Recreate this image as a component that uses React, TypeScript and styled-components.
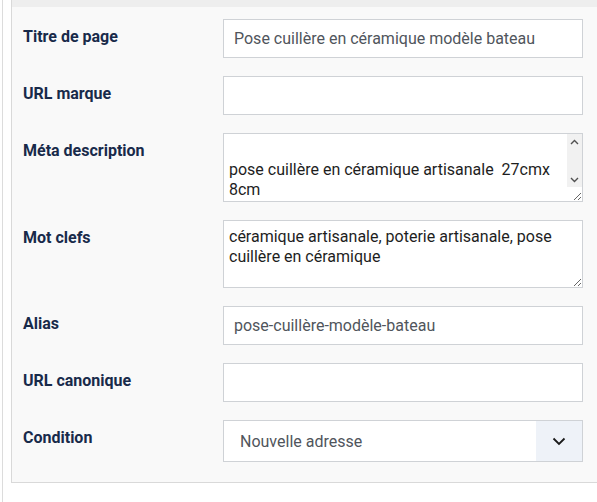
import React from "react";
import styled, { createGlobalStyle } from "styled-components";

const Global = createGlobalStyle`
  html, body { margin: 0; padding: 0; background: #ffffff; }
  body { font-family: Roboto, "Noto Sans", "Liberation Sans", sans-serif; overflow: hidden; }
  * { box-sizing: border-box; }
`;

const Page = styled.div`
  margin-left: 2px;
  border-left: 1px solid #dcdcdc;
  padding-left: 8px;
  min-height: 502px;
  width: 620px;
`;

const Panel = styled.div`
  width: 610px;
  background: #f9f9f9;
  border-left: 1px solid #d9d9d9;
  border-bottom: 1px solid #d9d9d9;
`;

const TopBand = styled.div`
  height: 7px;
  background: #eeeeee;
`;

const Body = styled.div`
  padding: 12px 0 20px 11px;
  display: flex;
  flex-direction: column;
  gap: 18px;
`;

const Row = styled.div`
  display: grid;
  grid-template-columns: 200px 360px;
  align-items: start;
`;

const Label = styled.label`
  padding-top: 6px;
  font-size: 16px;
  line-height: 24px;
  font-weight: 700;
  color: #182a4a;
`;

const Input = styled.input`
  display: block;
  width: 360px;
  height: 39px;
  padding: 0 10px;
  border: 1px solid #cfd2d6;
  background: #ffffff;
  font-family: inherit;
  font-size: 16px;
  color: #50555c;
  outline: none;
`;

const AreaWrap = styled.div`
  position: relative;
  width: 360px;
`;

const Area = styled.textarea<{ $h: number; $bar?: boolean }>`
  display: block;
  width: 360px;
  height: ${(p) => p.$h}px;
  padding: 6px ${(p) => (p.$bar ? 20 : 5)}px 6px 5px;
  border: 1px solid #cfd2d6;
  background: #ffffff;
  font-family: inherit;
  font-size: 16px;
  line-height: 20px;
  color: #1e1e1e;
  outline: none;
  resize: vertical;
  overflow: hidden;
`;

const ScrollBar = styled.div`
  position: absolute;
  top: 1px;
  right: 1px;
  width: 15px;
  height: 53px;
  background: #f1f1f1;
  display: flex;
  flex-direction: column;
  justify-content: space-between;
  align-items: center;
  padding: 5px 0 4px;
  pointer-events: none;
`;

const SelectBox = styled.div`
  display: flex;
  width: 360px;
  height: 42px;
  border: 1px solid #cfd2d6;
  background: #ffffff;
`;

const SelectValue = styled.div`
  flex: 1;
  display: flex;
  align-items: center;
  padding-left: 16px;
  font-size: 16px;
  color: #50555c;
`;

const Chevron = styled.div`
  width: 46px;
  display: flex;
  align-items: center;
  justify-content: center;
  background: #eef2f8;
`;

const Arrow = ({ up }: { up?: boolean }) => (
  <svg width="9" height="6" viewBox="0 0 9 6" fill="none">
    <path
      d={up ? "M1 5 L4.5 1.5 L8 5" : "M1 1 L4.5 4.5 L8 1"}
      stroke="#505050"
      strokeWidth="1.4"
    />
  </svg>
);

export default function App() {
  return (
    <>
      <Global />
      <Page>
        <Panel>
          <TopBand />
          <Body>
            <Row>
              <Label>Titre de page</Label>
              <Input readOnly value="Pose cuillère en céramique modèle bateau" />
            </Row>
            <Row>
              <Label>URL marque</Label>
              <Input readOnly value="" />
            </Row>
            <Row>
              <Label>Méta description</Label>
              <AreaWrap>
                <Area
                  $h={69}
                  $bar
                  readOnly
                  value={"\npose cuillère en céramique artisanale  27cmx 8cm"}
                />
                <ScrollBar>
                  <Arrow up />
                  <Arrow />
                </ScrollBar>
              </AreaWrap>
            </Row>
            <Row>
              <Label>Mot clefs</Label>
              <Area
                $h={68}
                readOnly
                value="céramique artisanale, poterie artisanale, pose cuillère en céramique"
              />
            </Row>
            <Row>
              <Label>Alias</Label>
              <Input readOnly value="pose-cuillère-modèle-bateau" />
            </Row>
            <Row>
              <Label>URL canonique</Label>
              <Input readOnly value="" />
            </Row>
            <Row>
              <Label>Condition</Label>
              <SelectBox>
                <SelectValue>Nouvelle adresse</SelectValue>
                <Chevron>
                  <svg width="14" height="9" viewBox="0 0 14 9" fill="none">
                    <path d="M1.5 1.5 L7 7 L12.5 1.5" stroke="#1a1a1a" strokeWidth="1.8" />
                  </svg>
                </Chevron>
              </SelectBox>
            </Row>
          </Body>
        </Panel>
      </Page>
    </>
  );
}
